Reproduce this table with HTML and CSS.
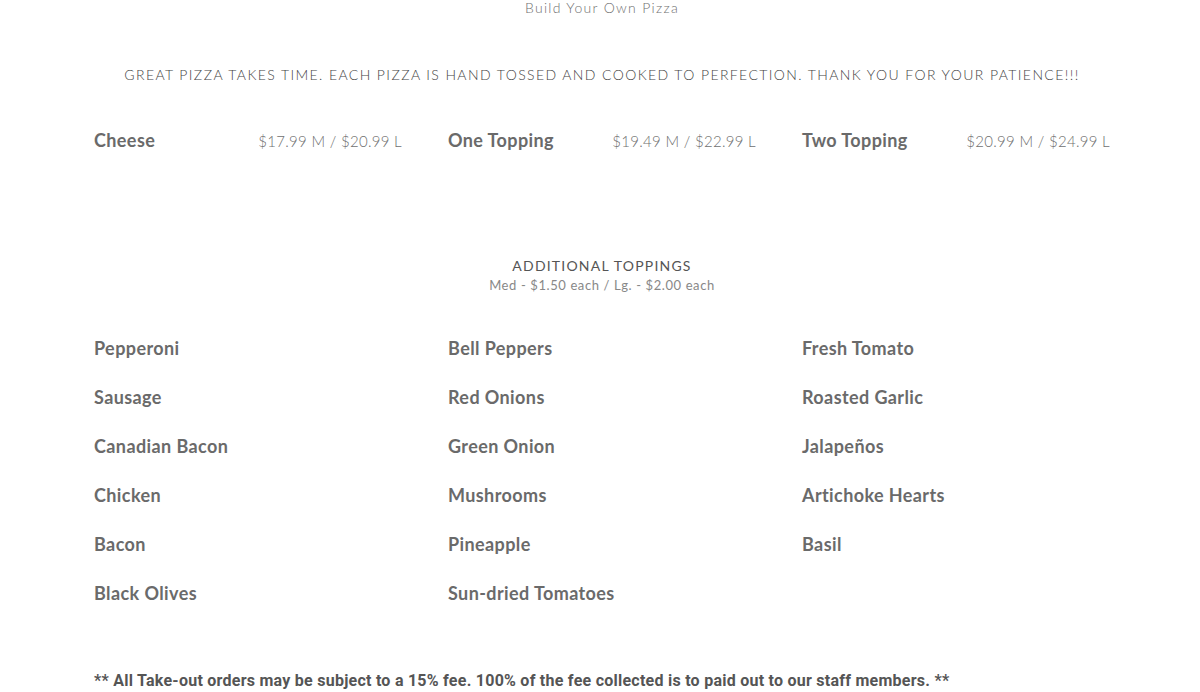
FILE: index.html
```html
<!DOCTYPE html>
<html>
<head>
<meta charset="utf-8">
<link rel="stylesheet" href="styles.css">
</head>
<body>
<div class="page">
  <h1 class="title">Build Your Own Pizza</h1>
  <p class="tagline">GREAT PIZZA TAKES TIME. EACH PIZZA IS HAND TOSSED AND COOKED TO PERFECTION. THANK YOU FOR YOUR PATIENCE!!!</p>
  <div class="grid sizes">
    <div class="item"><span class="name">Cheese</span><span class="price">$17.99 M / $20.99 L</span></div>
    <div class="item"><span class="name">One Topping</span><span class="price">$19.49 M / $22.99 L</span></div>
    <div class="item"><span class="name">Two Topping</span><span class="price">$20.99 M / $24.99 L</span></div>
  </div>
  <div class="section-head">
    <h2 class="section-title">ADDITIONAL TOPPINGS</h2>
    <p class="section-sub">Med - $1.50 each / Lg. - $2.00 each</p>
  </div>
  <div class="grid toppings">
    <div class="col">
      <div class="top">Pepperoni</div>
      <div class="top">Sausage</div>
      <div class="top">Canadian Bacon</div>
      <div class="top">Chicken</div>
      <div class="top">Bacon</div>
      <div class="top">Black Olives</div>
    </div>
    <div class="col">
      <div class="top">Bell Peppers</div>
      <div class="top">Red Onions</div>
      <div class="top">Green Onion</div>
      <div class="top">Mushrooms</div>
      <div class="top">Pineapple</div>
      <div class="top">Sun-dried Tomatoes</div>
    </div>
    <div class="col">
      <div class="top">Fresh Tomato</div>
      <div class="top">Roasted Garlic</div>
      <div class="top">Jalapeños</div>
      <div class="top">Artichoke Hearts</div>
      <div class="top">Basil</div>
    </div>
  </div>
  <p class="note">** All Take-out orders may be subject to a 15% fee. 100% of the fee collected is to paid out to our staff members. **</p>
</div>
</body>
</html>
```
FILE: styles.css
```css
html, body {
  margin: 0;
  padding: 0;
  background: #fff;
}
body {
  font-family: Lato, "Open Sans", sans-serif;
  color: #666;
}
.page {
  padding: 0 90px 0 94px;
}
.title {
  margin: 0;
  text-align: center;
  font-size: 14px;
  font-weight: 300;
  line-height: 16px;
  color: #6f6f6f;
  letter-spacing: 1.3px;
}
.tagline {
  margin: 51px 0 0;
  text-align: center;
  font-size: 14px;
  font-weight: 300;
  line-height: 16px;
  color: #444;
  letter-spacing: 1.4px;
}
.grid {
  display: grid;
  grid-template-columns: repeat(3, 1fr);
  column-gap: 46px;
}
.sizes {
  margin-top: 45px;
}
.item {
  display: flex;
  justify-content: space-between;
  align-items: baseline;
}
.name {
  font-size: 18px;
  font-weight: 700;
  color: #6a6a6a;
  line-height: 24px;
  letter-spacing: 0.4px;
}
.price {
  font-size: 15px;
  font-weight: 300;
  color: #6f6f6f;
  letter-spacing: 0.3px;
}
.section-head {
  margin-top: 105px;
  text-align: center;
}
.section-title {
  margin: 0;
  font-size: 14px;
  font-weight: 400;
  line-height: 18px;
  color: #555;
  letter-spacing: 1.2px;
}
.section-sub {
  margin: 2px 0 0;
  font-size: 13px;
  font-weight: 400;
  line-height: 16px;
  color: #888;
  letter-spacing: 0.6px;
}
.toppings {
  margin-top: 43px;
}
.col {
  display: flex;
  flex-direction: column;
  gap: 25px;
}
.top {
  font-size: 18px;
  font-weight: 700;
  line-height: 24px;
  color: #6a6a6a;
  letter-spacing: 0.4px;
}
.note {
  margin: 66px 0 0;
  font-family: Roboto, "Open Sans", sans-serif;
  font-size: 16px;
  font-weight: 700;
  color: #555;
  line-height: 20px;
  letter-spacing: 0.25px;
}
```
